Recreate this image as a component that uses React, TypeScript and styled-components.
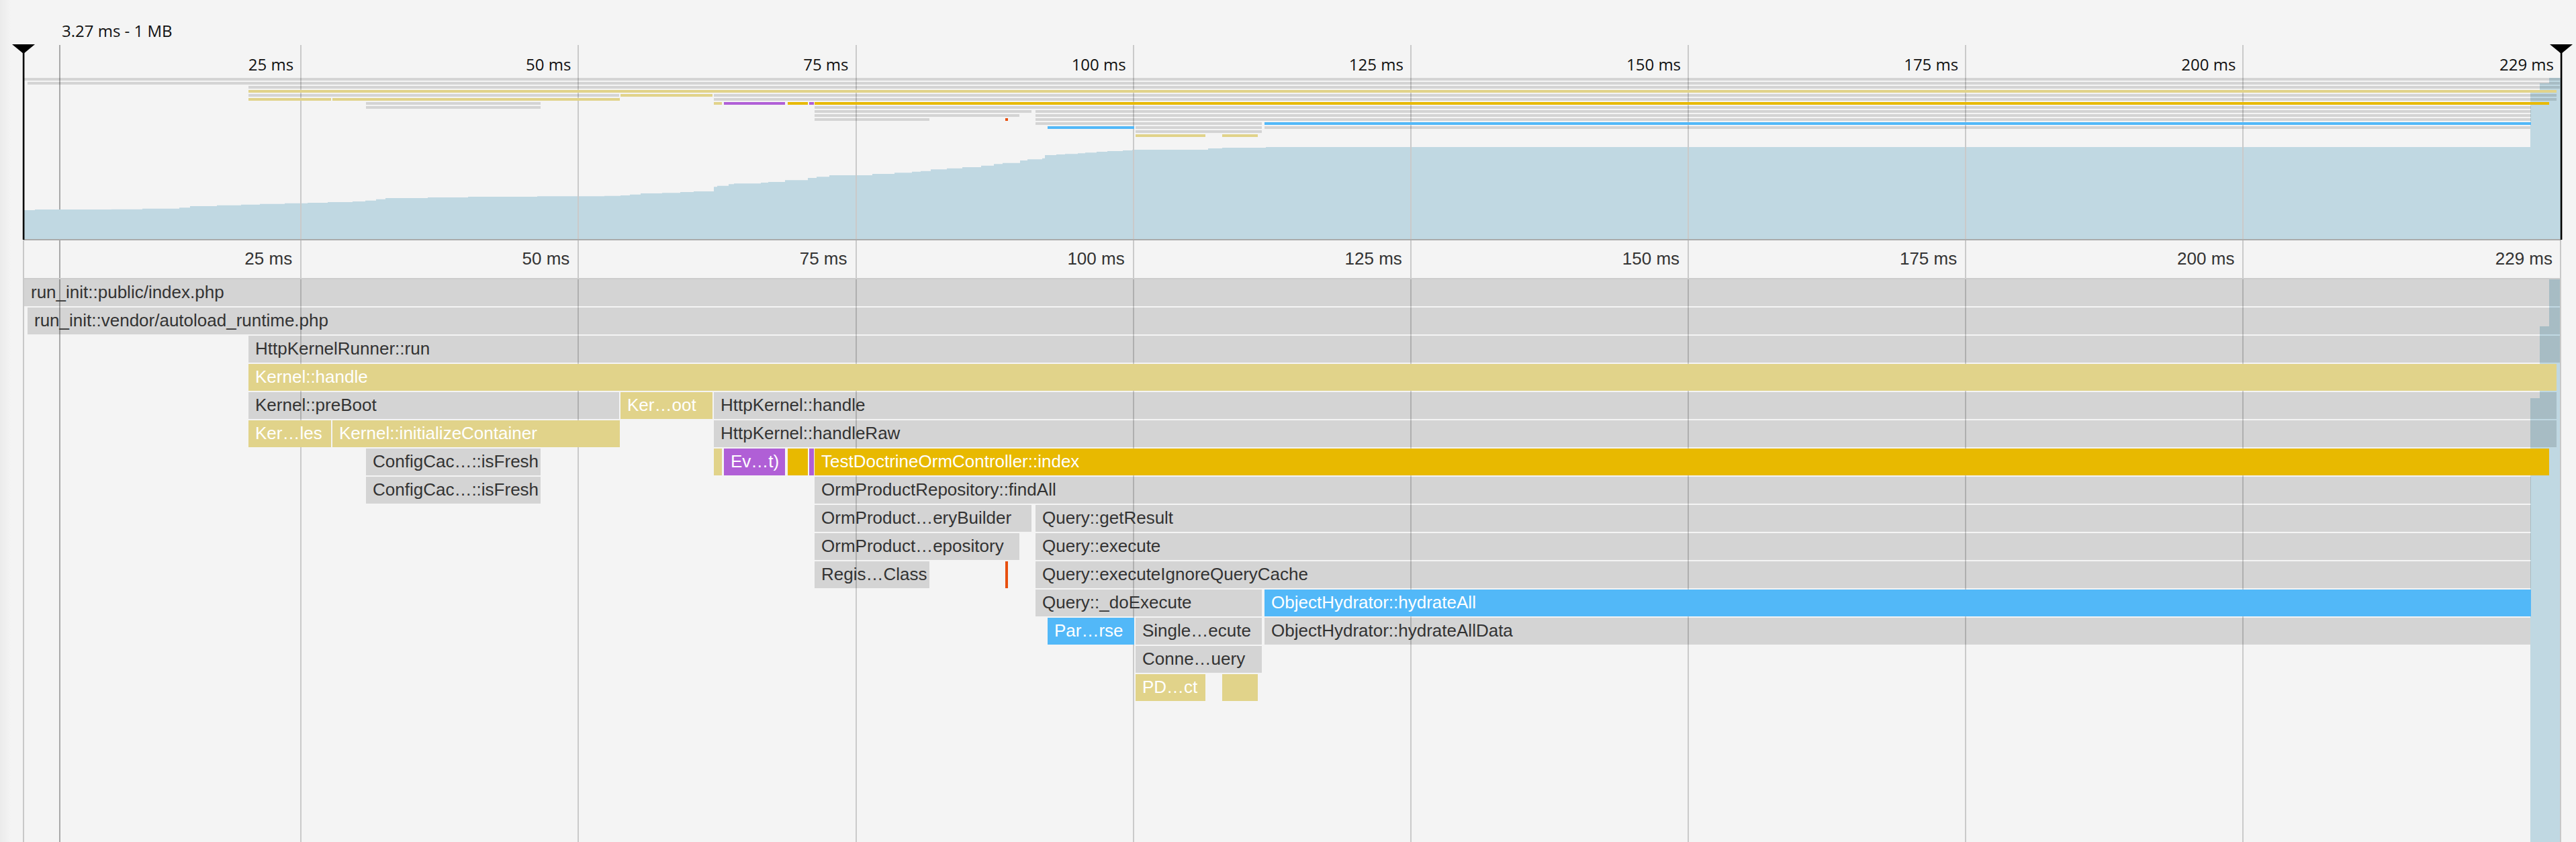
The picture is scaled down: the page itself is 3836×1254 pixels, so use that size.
import React from 'react';
import styled, { createGlobalStyle } from 'styled-components';

// time axis: 0 ms sits at x=35, 229 ms at the right marker
const PX_PER_MS = 16.527;
const ORIGIN = 35;
const xOf = (ms: number) => ORIGIN + ms * PX_PER_MS;

const OVERVIEW_X = 35;
const MAIN_X = 36;

type Kind = 'gray' | 'yellow' | 'gold' | 'purple' | 'blue' | 'red';

const fills: Record<Kind, string> = {
  gray: 'rgba(0, 0, 0, 0.13)',
  yellow: '#e1d38a',
  gold: '#e8b900',
  purple: '#b05fd6',
  blue: '#52b8f8',
  red: '#e8500f',
};

interface Frame {
  x1: number;
  x2: number;
  kind: Kind;
  label?: string;
}

const frames: Frame[][] = [
  [{ x1: 36, x2: 3812, kind: 'gray', label: 'run_init::public/index.php' }],
  [{ x1: 41, x2: 3812, kind: 'gray', label: 'run_init::vendor/autoload_runtime.php' }],
  [{ x1: 370, x2: 3812, kind: 'gray', label: 'HttpKernelRunner::run' }],
  [{ x1: 370, x2: 3807, kind: 'yellow', label: 'Kernel::handle' }],
  [
    { x1: 370, x2: 922, kind: 'gray', label: 'Kernel::preBoot' },
    { x1: 924, x2: 1061, kind: 'yellow', label: 'Ker…oot' },
    { x1: 1063, x2: 3807, kind: 'gray', label: 'HttpKernel::handle' },
  ],
  [
    { x1: 370, x2: 493, kind: 'yellow', label: 'Ker…les' },
    { x1: 495, x2: 923, kind: 'yellow', label: 'Kernel::initializeContainer' },
    { x1: 1063, x2: 3807, kind: 'gray', label: 'HttpKernel::handleRaw' },
  ],
  [
    { x1: 545, x2: 805, kind: 'gray', label: 'ConfigCac…::isFresh' },
    { x1: 1063, x2: 1075, kind: 'yellow' },
    { x1: 1078, x2: 1169, kind: 'purple', label: 'Ev…t)' },
    { x1: 1173, x2: 1203, kind: 'gold' },
    { x1: 1205, x2: 1212, kind: 'purple' },
    { x1: 1213, x2: 3796, kind: 'gold', label: 'TestDoctrineOrmController::index' },
  ],
  [
    { x1: 545, x2: 805, kind: 'gray', label: 'ConfigCac…::isFresh' },
    { x1: 1213, x2: 3769, kind: 'gray', label: 'OrmProductRepository::findAll' },
  ],
  [
    { x1: 1213, x2: 1536, kind: 'gray', label: 'OrmProduct…eryBuilder' },
    { x1: 1542, x2: 3769, kind: 'gray', label: 'Query::getResult' },
  ],
  [
    { x1: 1213, x2: 1518, kind: 'gray', label: 'OrmProduct…epository' },
    { x1: 1542, x2: 3769, kind: 'gray', label: 'Query::execute' },
  ],
  [
    { x1: 1213, x2: 1384, kind: 'gray', label: 'Regis…Class' },
    { x1: 1497, x2: 1501, kind: 'red' },
    { x1: 1542, x2: 3769, kind: 'gray', label: 'Query::executeIgnoreQueryCache' },
  ],
  [
    { x1: 1542, x2: 1879, kind: 'gray', label: 'Query::_doExecute' },
    { x1: 1883, x2: 3769, kind: 'blue', label: 'ObjectHydrator::hydrateAll' },
  ],
  [
    { x1: 1560, x2: 1689, kind: 'blue', label: 'Par…rse' },
    { x1: 1691, x2: 1879, kind: 'gray', label: 'Single…ecute' },
    { x1: 1883, x2: 3768, kind: 'gray', label: 'ObjectHydrator::hydrateAllData' },
  ],
  [{ x1: 1691, x2: 1879, kind: 'gray', label: 'Conne…uery' }],
  [
    { x1: 1691, x2: 1795, kind: 'yellow', label: 'PD…ct' },
    { x1: 1820, x2: 1873, kind: 'yellow' },
  ],
];

// memory usage steps: [x where the step starts, top y of the area] in page px
const memorySteps: [number, number][] = [
  [35, 313], [52, 312], [166, 311.7], [212, 310.7], [267, 309.3], [283, 307],
  [323, 305.7], [359, 304.7], [387, 303.7], [424, 302.7], [458, 302], [488, 301],
  [525, 300], [544, 298.7], [560, 296.7], [574, 295], [637, 294], [697, 293],
  [800, 292.3], [900, 291.7], [924, 291], [938, 289.7], [954, 288], [986, 287.3],
  [1013, 286], [1033, 285], [1063, 278.3], [1068, 276.7], [1085, 274.3],
  [1093, 273.3], [1133, 272], [1144, 271], [1169, 268.3], [1203, 265],
  [1216, 263.3], [1235, 261], [1299, 259], [1332, 257.3], [1358, 255.7],
  [1371, 254.7], [1386, 252.3], [1410, 250.7], [1433, 249], [1461, 246.7],
  [1480, 244.3], [1493, 242.7], [1519, 239], [1530, 237.3], [1552, 235.7],
  [1556, 231], [1573, 230], [1586, 229.3], [1605, 228.3], [1616, 227.3],
  [1633, 226], [1649, 225], [1672, 224], [1686, 223], [1799, 221], [1820, 220],
  [1885, 219], [3768, 138], [3782, 124], [3796, 116],
];

const OVERVIEW_TOP = 67;
const OVERVIEW_W = 3779;
const OVERVIEW_H = 289;

const memoryPath = (() => {
  let d = `M0 ${OVERVIEW_H}`;
  memorySteps.forEach(([x, y], i) => {
    const lx = x - OVERVIEW_X;
    const ly = y - OVERVIEW_TOP;
    const next = i + 1 < memorySteps.length ? memorySteps[i + 1][0] - OVERVIEW_X : OVERVIEW_W;
    d += ` L${lx} ${ly} L${next} ${ly}`;
  });
  return `${d} L${OVERVIEW_W} ${OVERVIEW_H} Z`;
})();

const ticks = [25, 50, 75, 100, 125, 150, 175, 200];

const GlobalStyle = createGlobalStyle`
  html, body {
    margin: 0;
    padding: 0;
    background: #f4f4f4;
    overflow: hidden;
  }
  #root {
    width: 3836px;
    height: 1254px;
  }
`;

const Page = styled.div`
  position: relative;
  width: 3836px;
  height: 1254px;
  overflow: hidden;
  background: linear-gradient(90deg, #ebebeb 0, #f1f1f1 12px, #f4f4f4 16px);
  font-family: 'Open Sans', 'Noto Sans', sans-serif;
`;

const Header = styled.header`
  box-sizing: border-box;
  height: 67px;
  padding: 34px 0 0 92px;
  font-size: 24px;
  line-height: 24px;
  color: #111;
`;

const CursorLine = styled.div`
  position: absolute;
  left: 88px;
  top: 67px;
  bottom: 0;
  width: 2px;
  background: #a9a9a9;
`;

const Timeline = styled.div`
  position: relative;
  z-index: 1;
  margin-left: 34px;
  width: 3780px;
`;

const Overview = styled.section`
  position: relative;
  margin-left: 1px;
  width: ${OVERVIEW_W}px;
  height: ${OVERVIEW_H}px;
  border-bottom: 2px solid #aaa;
`;

const MemoryChart = styled.svg`
  position: absolute;
  left: 0;
  top: 0;
  display: block;
`;

const GridLine = styled.div`
  position: absolute;
  top: 0;
  bottom: 0;
  width: 2px;
  margin-left: -1px;
  background: #cacaca;
`;

const MiniRows = styled.div`
  position: relative;
  display: flex;
  flex-direction: column;
  gap: 2px;
  padding-top: 49px;
`;

const MiniRow = styled.div`
  position: relative;
  height: 4px;
`;

const MiniBar = styled.div<{ $kind: Kind }>`
  position: absolute;
  top: 0;
  height: 100%;
  background: ${({ $kind }) => fills[$kind]};
`;

const OverviewLabel = styled.span`
  position: absolute;
  top: 17px;
  font-size: 24px;
  line-height: 24px;
  color: #111;
  white-space: nowrap;
  transform: translateX(-100%);
`;

const Marker = styled.svg`
  position: absolute;
  top: -1px;
  display: block;
`;

const MainArea = styled.div`
  position: relative;
  box-sizing: border-box;
  height: 896px;
  border-left: 2px solid #c8c8c8;
  display: flex;
  flex-direction: column;
`;

const Axis = styled.div`
  position: relative;
  z-index: 1;
  height: 56px;
  border-bottom: 2px solid #cccccc;
  border-right: 2px solid #c8c8c8;
  font-family: 'Liberation Sans', Arial, sans-serif;
  font-size: 26px;
  color: #333;
`;

const AxisLabel = styled.span`
  position: absolute;
  top: 13.5px;
  line-height: 26px;
  white-space: nowrap;
  transform: translateX(-100%);
`;

const Flame = styled.div`
  position: relative;
  z-index: 1;
  flex: 1;
  border-right: 2px solid #c8c8c8;
`;

const FlameRows = styled.div`
  position: relative;
  display: flex;
  flex-direction: column;
  gap: 2px;
`;

const FlameRow = styled.div`
  position: relative;
  height: 40px;
`;

const FrameBar = styled.div<{ $kind: Kind }>`
  position: absolute;
  top: 0;
  height: 40px;
  overflow: hidden;
  background: ${({ $kind }) => fills[$kind]};
  color: ${({ $kind }) => ($kind === 'gray' ? '#333' : '#fff')};
`;

const FrameLabel = styled.span`
  display: block;
  padding: 0 10px;
  white-space: nowrap;
  font-family: 'Liberation Sans', Arial, sans-serif;
  font-size: 26px;
  line-height: 38px;
`;

const RangeMarker: React.FC<{ x: number }> = ({ x }) => (
  <Marker width={34} height={292} viewBox="0 0 34 292" style={{ left: x - OVERVIEW_X - 17 }}>
    <polygon points="0,0 34,0 17,14" fill="#000" />
    <rect x={15.8} y={10} width={2.6} height={281} fill="#000" />
  </Marker>
);

const App: React.FC = () => (
  <Page>
    <GlobalStyle />
    <CursorLine />
    <Header>3.27 ms - 1 MB</Header>
    <Timeline>
      <Overview>
        <MemoryChart width={OVERVIEW_W} height={OVERVIEW_H} viewBox={`0 0 ${OVERVIEW_W} ${OVERVIEW_H}`}>
          <path d={memoryPath} fill="#c0d8e2" />
        </MemoryChart>
        {ticks.map((t) => (
          <GridLine key={t} style={{ left: xOf(t) - OVERVIEW_X }} />
        ))}
        <MiniRows>
          {frames.map((row, i) => (
            <MiniRow key={i}>
              {row.map((f, j) => (
                <MiniBar
                  key={j}
                  $kind={f.kind}
                  style={{ left: f.x1 - OVERVIEW_X, width: f.x2 - f.x1 }}
                />
              ))}
            </MiniRow>
          ))}
        </MiniRows>
        {ticks.map((t) => (
          <OverviewLabel key={t} style={{ left: xOf(t) - OVERVIEW_X - 11 }}>
            {t} ms
          </OverviewLabel>
        ))}
        <OverviewLabel style={{ left: 3803 - OVERVIEW_X }}>229 ms</OverviewLabel>
        <RangeMarker x={35} />
        <RangeMarker x={3814} />
      </Overview>

      <MainArea>
        {ticks.map((t) => (
          <GridLine key={t} style={{ left: xOf(t) - MAIN_X }} />
        ))}
        <Axis>
          {ticks.map((t) => (
            <AxisLabel key={t} style={{ left: xOf(t) - MAIN_X - 13 }}>
              {t} ms
            </AxisLabel>
          ))}
          <AxisLabel style={{ left: 3801 - MAIN_X }}>229 ms</AxisLabel>
        </Axis>
        <Flame>
          <MemoryChart width={3776} height={838} viewBox="0 0 3776 838">
            <path d="M3760 0 H3776 V838 H3732 V177 H3746 V70 H3760 Z" fill="#c0d8e2" />
          </MemoryChart>
          <FlameRows>
            {frames.map((row, i) => (
              <FlameRow key={i}>
                {row.map((f, j) => (
                  <FrameBar
                    key={j}
                    $kind={f.kind}
                    style={{ left: f.x1 - MAIN_X, width: f.x2 - f.x1 }}
                  >
                    {f.label && <FrameLabel>{f.label}</FrameLabel>}
                  </FrameBar>
                ))}
              </FlameRow>
            ))}
          </FlameRows>
        </Flame>
      </MainArea>
    </Timeline>
  </Page>
);

export default App;
